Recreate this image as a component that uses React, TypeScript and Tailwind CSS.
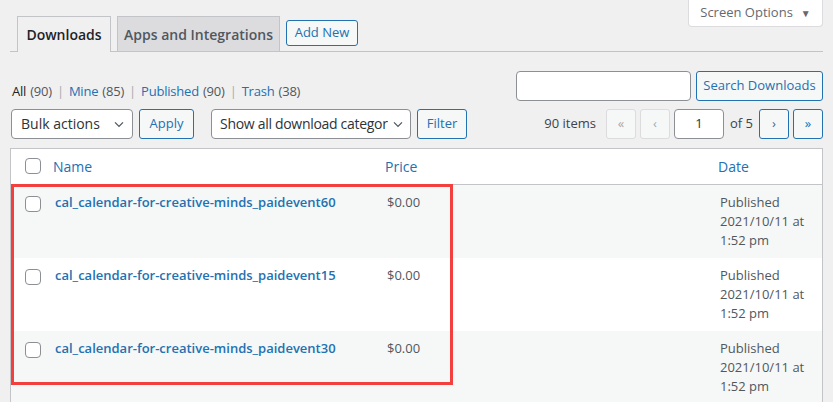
import React from 'react';

const rows = [
  { name: 'cal_calendar-for-creative-minds_paidevent60', price: '$0.00' },
  { name: 'cal_calendar-for-creative-minds_paidevent15', price: '$0.00' },
  { name: 'cal_calendar-for-creative-minds_paidevent30', price: '$0.00' },
];

const views = [
  { label: 'All', count: '(90)', current: true },
  { label: 'Mine', count: '(85)' },
  { label: 'Published', count: '(90)' },
  { label: 'Trash', count: '(38)' },
];

const Checkbox = () => (
  <span className="block h-4 w-4 rounded-[4px] border border-[#8c8f94] bg-white" />
);

const Chevron = () => (
  <svg width="16" height="16" viewBox="0 0 20 20" className="shrink-0 text-[#50575e]">
    <path d="M5 8l5 5 5-5" fill="none" stroke="currentColor" strokeWidth="1.6" />
  </svg>
);

export default function App() {
  return (
    <div
      className="relative h-[402px] w-[833px] overflow-hidden bg-[#f0f0f1] text-[13px] text-[#3c434a]"
      style={{ fontFamily: '"Open Sans", "Noto Sans", sans-serif' }}
    >
      {/* screen options */}
      <div className="flex justify-end pr-[10px]">
        <div className="flex h-[27px] w-[135px] items-center justify-center gap-2 rounded-b-[4px] border border-t-0 border-[#dcdcde] bg-white text-[#646970]">
          <span>Screen Options</span>
          <span className="text-[10px]">▼</span>
        </div>
      </div>

      {/* tabs */}
      <div className="mx-[10px] mt-[-11px] flex items-end gap-[6px] border-b border-[#c3c4c7] pl-[7px]">
        <div className="-mb-px flex h-[36px] w-[94px] items-center justify-center border border-b-0 border-[#c3c4c7] bg-[#f0f0f1] text-[14px] font-semibold text-[#1d2327]">
          Downloads
        </div>
        <div className="flex h-[35px] w-[163px] items-center justify-center border border-b-0 border-[#c3c4c7] bg-[#dcdcde] text-[14px] font-semibold text-[#50575e]">
          Apps and Integrations
        </div>
        <div className="mb-[5px] flex h-[26px] w-[72px] items-center justify-center rounded-[3px] border border-[#2271b1] bg-[#f6f7f7] text-[13px] text-[#2271b1]">
          Add New
        </div>
      </div>

      {/* views + search */}
      <div className="mt-[18px] flex items-center justify-between pl-[12px] pr-[10px]">
        <div className="mt-[12px] flex items-center text-[13px] tracking-[-0.2px]">
          {views.map((v, i) => (
            <React.Fragment key={v.label}>
              {i > 0 && <span className="mx-[5px] text-[#a7aaad]">|</span>}
              <span className={v.current ? 'text-[#1d2327]' : 'text-[#2271b1]'}>{v.label}</span>
              <span className="ml-[4px] text-[#50575e]">{v.count}</span>
            </React.Fragment>
          ))}
        </div>
        <div className="flex items-center gap-[5px]">
          <div className="h-[30px] w-[175px] rounded-[4px] border border-[#8c8f94] bg-white" />
          <div className="flex h-[30px] w-[127px] items-center justify-center rounded-[3px] border border-[#2271b1] bg-[#f6f7f7] text-[#2271b1]">
            Search Downloads
          </div>
        </div>
      </div>

      {/* tablenav */}
      <div className="mt-[7px] flex items-center justify-between pl-[11px] pr-[10px]">
        <div className="flex items-center">
          <div className="flex h-[30px] w-[122px] items-center justify-between rounded-[4px] border border-[#8c8f94] bg-white pl-[9px] pr-[5px] text-[14px] text-[#2c3338]">
            <span>Bulk actions</span>
            <Chevron />
          </div>
          <div className="ml-[6px] flex h-[30px] w-[55px] items-center justify-center rounded-[3px] border border-[#2271b1] bg-[#f6f7f7] text-[#2271b1]">
            Apply
          </div>
          <div className="ml-[17px] flex h-[30px] w-[200px] items-center justify-between overflow-hidden rounded-[4px] border border-[#8c8f94] bg-white pl-[8px] pr-[4px] text-[14px] tracking-[-0.3px] text-[#2c3338]">
            <span className="overflow-hidden whitespace-nowrap">Show all download categor</span>
            <Chevron />
          </div>
          <div className="ml-[6px] flex h-[30px] w-[50px] items-center justify-center rounded-[3px] border border-[#2271b1] bg-[#f6f7f7] text-[#2271b1]">
            Filter
          </div>
        </div>
        <div className="flex items-center text-[#3c434a]">
          <span className="mr-[10px]">90 items</span>
          <div className="flex h-[30px] w-[30px] items-center justify-center rounded-[3px] border border-[#dcdcde] bg-[#f6f7f7] text-[#a7aaad]">«</div>
          <div className="ml-[4px] flex h-[30px] w-[30px] items-center justify-center rounded-[3px] border border-[#dcdcde] bg-[#f6f7f7] text-[#a7aaad]">‹</div>
          <div className="ml-[4px] flex h-[30px] w-[50px] items-center justify-center rounded-[4px] border border-[#8c8f94] bg-white text-[#2c3338]">1</div>
          <span className="ml-[6px] mr-[6px]">of 5</span>
          <div className="flex h-[30px] w-[30px] items-center justify-center rounded-[3px] border border-[#2271b1] bg-[#f6f7f7] text-[#2271b1]">›</div>
          <div className="ml-[4px] flex h-[30px] w-[30px] items-center justify-center rounded-[3px] border border-[#2271b1] bg-[#f6f7f7] text-[#2271b1]">»</div>
        </div>
      </div>

      {/* table */}
      <div className="mx-[10px] mt-[9px] border border-[#c3c4c7] bg-white">
        <div className="flex h-[36px] items-center border-b border-[#c3c4c7]">
          <div className="flex w-[42px] justify-center pl-[2px]"><Checkbox /></div>
          <div className="w-[332px] text-[14px] text-[#2271b1]">Name</div>
          <div className="w-[333px] text-[14px] text-[#2271b1]">Price</div>
          <div className="text-[14px] text-[#2271b1]">Date</div>
        </div>
        {rows.map((r, i) => (
          <div key={r.name} className={`flex h-[73px] items-start pt-[8px] ${i % 2 === 0 ? 'bg-[#f6f7f7]' : 'bg-white'}`}>
            <div className="flex w-[42px] justify-center pl-[2px] pt-[3px]"><Checkbox /></div>
            <div className="w-[334px] pl-[2px] text-[13px] font-semibold text-[#2271b1]">{r.name}</div>
            <div className="w-[333px] text-[#50575e]">{r.price}</div>
            <div className="leading-[19px] text-[#50575e]">
              <div>Published</div>
              <div>2021/10/11 at</div>
              <div>1:52 pm</div>
            </div>
          </div>
        ))}
      </div>

      {/* annotation */}
      <div className="pointer-events-none absolute left-[11px] top-[184px] h-[201px] w-[442px] border-[3px] border-[#f43f3f]" />
    </div>
  );
}
